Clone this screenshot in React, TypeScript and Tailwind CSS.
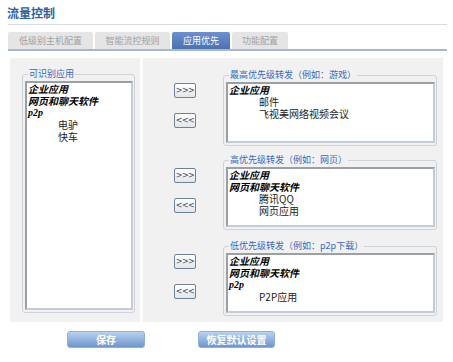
import React from "react";

const cjk = { fontFamily: '"Noto Sans CJK SC", "Liberation Sans", sans-serif' };

type Item = { text: string; group?: boolean; latin?: boolean };

function ListBox({ items, h }: { items: Item[]; h: string }) {
  return (
    <div
      className={`${h} bg-white border-2 border-t-[#9aa0a6] border-l-[#9aa0a6] border-r-[#c4ccd6] border-b-[#c4ccd6] pl-[1px] overflow-hidden`}
    >
      {items.map((it, i) =>
        it.group ? (
          <div
            key={i}
            className="text-[10px] leading-[12px] font-bold italic text-black whitespace-nowrap"
            style={it.latin ? { fontFamily: '"Liberation Serif", serif' } : cjk}
          >
            {it.text}
          </div>
        ) : (
          <div key={i} className="text-[10px] leading-[12px] text-[#222] pl-[30px] whitespace-nowrap" style={cjk}>
            {it.text}
          </div>
        )
      )}
    </div>
  );
}

function Box({ legend, items, h, wide }: { legend: string; items: Item[]; h: string; wide?: boolean }) {
  return (
    <fieldset className={`${wide ? "w-[214px]" : "w-[113px]"} border border-[#cfd2d6] rounded-[3px] pl-[2px] pr-[1px] pb-[2px] pt-[1px]`}>
      <legend className="ml-[3px] px-[1px] text-[9px] leading-[12px] text-[#3569c2] whitespace-nowrap" style={cjk}>
        {legend}
      </legend>
      <ListBox items={items} h={h} />
    </fieldset>
  );
}

function MoveBtn({ label }: { label: string }) {
  return (
    <div className="w-[22px] h-[15px] border border-[#70829a] rounded-[2px] bg-gradient-to-b from-white to-[#e2e6ea] flex items-center justify-center text-[8px] leading-none text-[#3c4a60] tracking-[-0.5px]" style={{ fontFamily: '"DejaVu Sans", sans-serif' }}>
      {label}
    </div>
  );
}

function Row({ legend, items, h, className }: { legend: string; items: Item[]; h: string; className?: string }) {
  return (
    <div className={`flex items-start pl-[31px] ${className ?? ""}`}>
      <div className="w-[22px] flex flex-col gap-[15px] mt-[14px]">
        <MoveBtn label="&gt;&gt;&gt;" />
        <MoveBtn label="&lt;&lt;&lt;" />
      </div>
      <div className="ml-[27px]">
        <Box legend={legend} items={items} h={h} wide />
      </div>
    </div>
  );
}

function Tab({ label, active, w }: { label: string; active?: boolean; w: string }) {
  return (
    <div
      className={`${w} h-[17px] rounded-t-[2px] flex items-center justify-center text-[9px] ${
        active ? "bg-gradient-to-b from-[#6d91cd] to-[#4b71b5] text-white" : "bg-[#e5e5e5] text-[#a2a2a2]"
      }`}
      style={cjk}
    >
      {label}
    </div>
  );
}

function BlueBtn({ label, w }: { label: string; w: string }) {
  return (
    <div
      className={`${w} h-[17px] rounded-[3px] border border-[#8fb0d8] bg-gradient-to-b from-[#b9d2f0] to-[#6e96cc] flex items-center justify-center text-[10px] font-bold text-white`}
      style={cjk}
    >
      {label}
    </div>
  );
}

export default function App() {
  return (
    <div className="w-[453px] h-[362px] bg-white overflow-hidden" style={cjk}>
      <div className="h-[24px] pl-[7px] pt-[6px] text-[12px] leading-[14px] font-bold text-[#2f5f9f]">流量控制</div>
      <div className="ml-[8px] w-[439px] h-px bg-[#d5dbe3]" />
      <div className="ml-[8px] w-[439px] mt-[7px] flex gap-[2px] border-b-2 border-[#a8b8cc]">
        <Tab label="低级别主机配置" w="w-[85px]" />
        <Tab label="智能流控规则" w="w-[75px]" />
        <Tab label="应用优先" w="w-[58px]" active />
        <Tab label="功能配置" w="w-[56px]" />
      </div>
      <div className="ml-[10px] mt-[7px] flex gap-[3px] h-[264px]">
        <div className="w-[130px] bg-[#f1f1f1] pl-[12px] pt-[10px]">
          <Box
            legend="可识别应用"
            h="h-[229px]"
            items={[
              { text: "企业应用", group: true },
              { text: "网页和聊天软件", group: true },
              { text: "p2p", group: true, latin: true },
              { text: "电驴" },
              { text: "快车" },
            ]}
          />
        </div>
        <div className="w-[300px] bg-[#f1f1f1] pt-[11px]">
          <Row
            legend="最高优先级转发（例如：游戏）"
            h="h-[61px]"
            items={[
              { text: "企业应用", group: true },
              { text: "邮件" },
              { text: "飞视美网络视频会议" },
            ]}
          />
          <Row
            className="mt-[8px]"
            legend="高优先级转发（例如：网页）"
            h="h-[60px]"
            items={[
              { text: "企业应用", group: true },
              { text: "网页和聊天软件", group: true },
              { text: "腾讯QQ" },
              { text: "网页应用" },
            ]}
          />
          <Row
            className="mt-[10px]"
            legend="低优先级转发（例如：p2p下载）"
            h="h-[60px]"
            items={[
              { text: "企业应用", group: true },
              { text: "网页和聊天软件", group: true },
              { text: "p2p", group: true, latin: true },
              { text: "P2P应用" },
            ]}
          />
        </div>
      </div>
      <div className="flex ml-[67px] mt-[9px] gap-[53px]">
        <BlueBtn label="保存" w="w-[78px]" />
        <BlueBtn label="恢复默认设置" w="w-[77px]" />
      </div>
    </div>
  );
}
